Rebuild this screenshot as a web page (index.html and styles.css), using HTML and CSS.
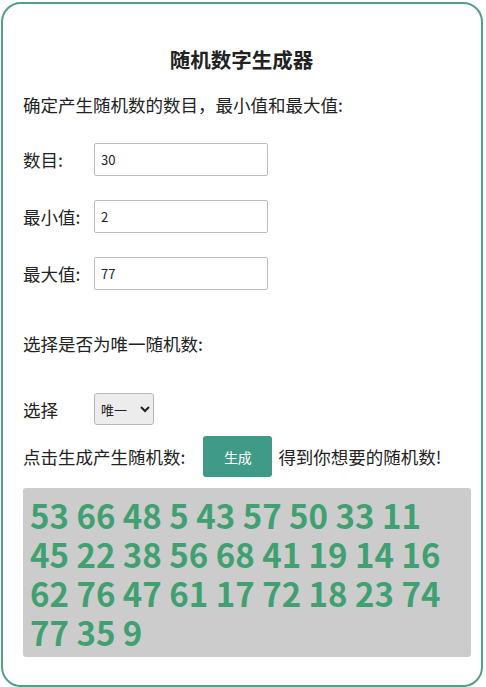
FILE: index.html
```html
<!DOCTYPE html>
<html lang="zh-CN">
<head>
  <meta charset="UTF-8">
  <meta name="viewport" content="width=device-width, initial-scale=1.0">
  <title>随机数字生成器</title>
  <link rel="stylesheet" href="styles.css">
</head>
<body>
  <div class="card">
    <h1>随机数字生成器</h1>
    <p class="intro">确定产生随机数的数目，最小值和最大值:</p>

    <div class="field">
      <label for="count">数目:</label>
      <input id="count" type="text" value="30">
    </div>
    <div class="field">
      <label for="min">最小值:</label>
      <input id="min" type="text" value="2">
    </div>
    <div class="field">
      <label for="max">最大值:</label>
      <input id="max" type="text" value="77">
    </div>

    <p class="unique-tip">选择是否为唯一随机数:</p>

    <div class="field select-row">
      <label for="unique">选择</label>
      <select id="unique">
        <option>唯一</option>
        <option>可重复</option>
      </select>
    </div>

    <div class="action-row">
      <span>点击生成产生随机数:</span>
      <button class="gen-btn">生成</button>
      <span>得到你想要的随机数!</span>
    </div>

    <div id="result" class="result">53 66 48 5 43 57 50 33 11 45 22 38 56 68 41 19 14 16 62 76 47 61 17 72 18 23 74 77 35 9</div>
  </div>
</body>
</html>
```

FILE: styles.css
```css
body {
  margin: 0;
  background-color: #fff;
  color: #222;
  font-family: "Noto Sans CJK SC", "Noto Sans", sans-serif;
}

.card {
  box-sizing: border-box;
  margin: 2px 3px 0 1px;
  height: 685px;
  border: 2px solid #559f86;
  border-radius: 20px;
  padding: 41px 9px 0 20px;
}

h1 {
  margin: 0;
  padding-right: 12px;
  font-size: 20.5px;
  line-height: 28px;
  font-weight: bold;
  text-align: center;
}

.intro {
  margin: 20px 0 0;
  font-size: 17.5px;
  line-height: 24px;
}

.field {
  display: flex;
  align-items: center;
  margin-top: 24px;
  font-size: 17.5px;
}

.intro + .field {
  margin-top: 26px;
}

.field label {
  width: 71px;
  flex-shrink: 0;
}

.field input {
  box-sizing: border-box;
  width: 174px;
  height: 33px;
  border: 1px solid #bdbdbd;
  border-radius: 2px;
  padding: 0 6px;
  font-family: inherit;
  font-size: 13px;
  color: #222;
}

.unique-tip {
  margin: 42px 0 0;
  font-size: 17.5px;
  line-height: 24px;
}

.select-row {
  margin-top: 37px;
}

.select-row select {
  box-sizing: border-box;
  width: 60px;
  height: 32px;
  border: 1px solid #b8b8b8;
  border-radius: 3px;
  background-color: #ececec;
  font-family: inherit;
  font-size: 13px;
  color: #222;
  padding: 0 2px;
}

.action-row {
  display: flex;
  align-items: center;
  margin-top: 11px;
  font-size: 17.5px;
}

.gen-btn {
  width: 69px;
  height: 41px;
  margin: 0 6px 0 18px;
  border: none;
  border-radius: 3px;
  background-color: #3f9a88;
  color: #fff;
  font-family: inherit;
  font-size: 14px;
}

.result {
  box-sizing: border-box;
  width: 448px;
  margin-top: 11px;
  padding: 8px 12px 5px 7px;
  background-color: #cccccc;
  border-radius: 3px;
  color: #40a072;
  font-size: 33px;
  font-weight: bold;
  line-height: 39px;
}
```
